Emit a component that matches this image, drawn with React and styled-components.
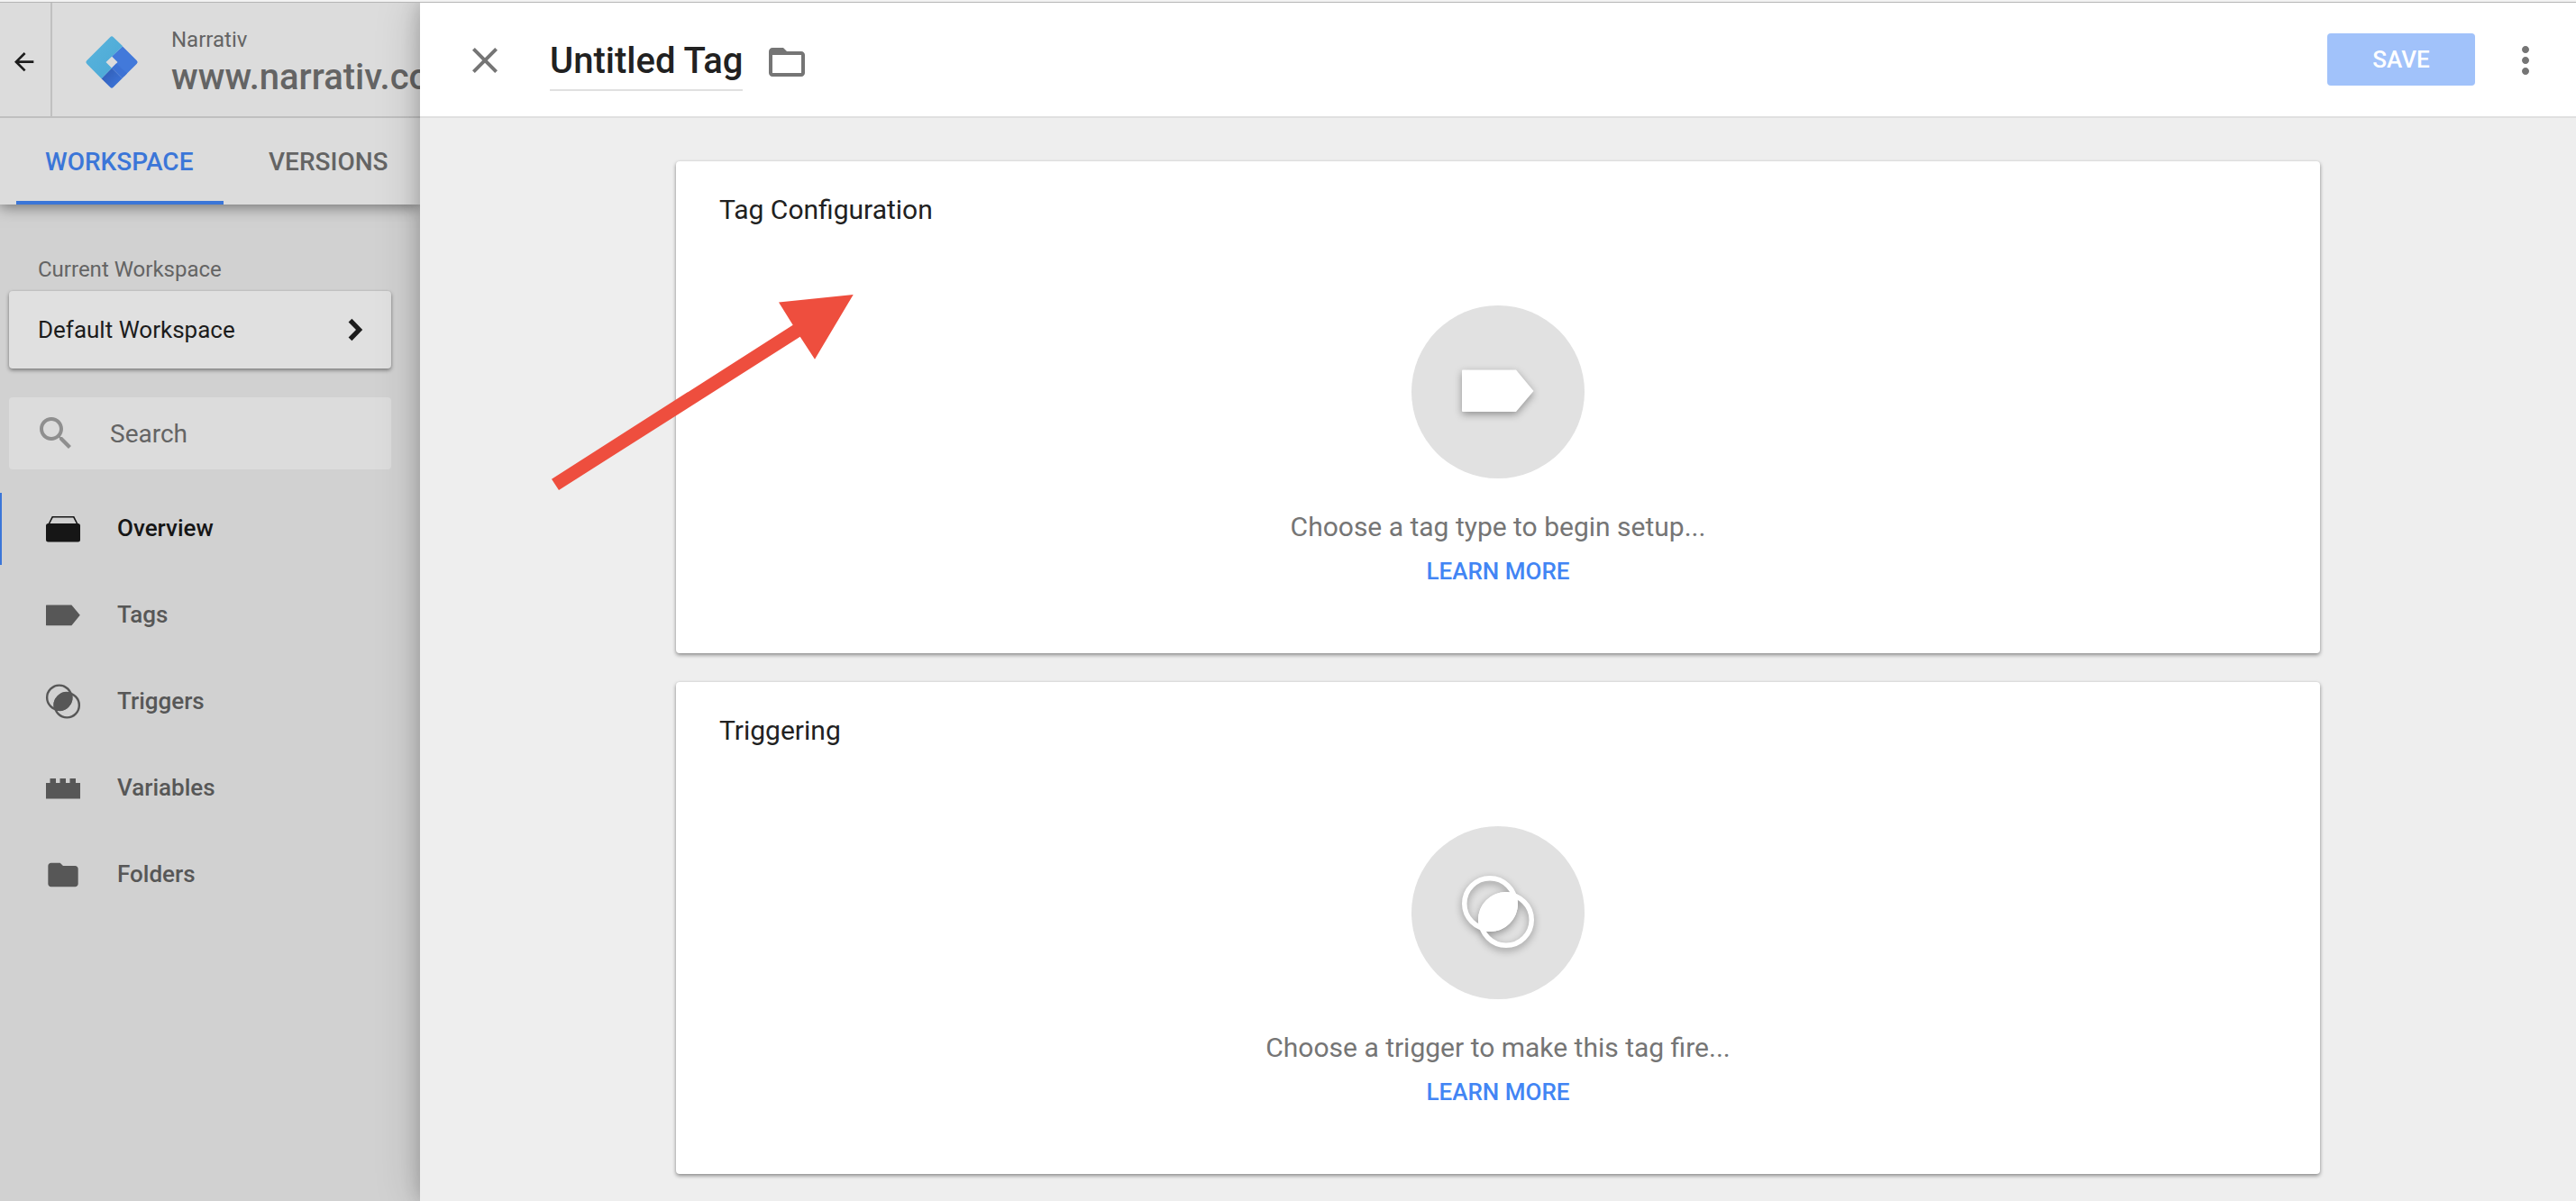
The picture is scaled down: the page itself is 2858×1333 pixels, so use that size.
import React, { useState } from 'react';
import styled, { createGlobalStyle, css } from 'styled-components';

const color = {
  blue: '#4285f4',
  dimBlue: '#3b76d8',
  ink: '#212121',
  dimInk: '#1c1c1c',
  gray: '#757575',
  dimGray: '#646464',
  line: '#e0e0e0',
  dimLine: '#c0c0c0',
};

const raised = '0 2px 4px rgba(0, 0, 0, 0.42), 0 0 2px rgba(0, 0, 0, 0.08)';

const GlobalStyle = createGlobalStyle`
  *, *::before, *::after { box-sizing: border-box; }
  body {
    margin: 0;
    font-family: Roboto, "Liberation Sans", sans-serif;
    color: ${color.ink};
    background: #eeeeee;
  }
  button, input { font-family: inherit; margin: 0; }
`;

const Page = styled.div`
  display: flex;
  flex-direction: column;
  min-height: 100vh;
`;

const WindowEdge = styled.div`
  height: 3px;
  background: #f3f3f3;
  border-bottom: 1px solid #b5b5b5;
`;

const Columns = styled.div`
  display: flex;
  flex: 1;
`;

/* ---------- sidebar ---------- */

const Sidebar = styled.aside`
  flex: 0 0 466px;
  min-width: 0;
  overflow: hidden;
  display: flex;
  flex-direction: column;
  background: #d1d1d1;
`;

const SidebarTop = styled.div`
  background: #dcdcdc;
  box-shadow: 0 2px 16px rgba(0, 0, 0, 0.5);
`;

const AccountBar = styled.header`
  display: flex;
  align-items: center;
  height: 128px;
  border-bottom: 2px solid ${color.dimLine};
`;

const IconButton = styled.button`
  display: flex;
  align-items: center;
  justify-content: center;
  padding: 0;
  border: 0;
  background: none;
  color: ${color.gray};
  cursor: pointer;
`;

const BackButton = styled(IconButton)`
  align-self: stretch;
  flex: 0 0 58px;
  border-right: 2px solid ${color.dimLine};
  color: ${color.dimInk};
`;

const Brand = styled.div`
  display: flex;
  align-items: center;
  gap: 34px;
  padding: 4px 0 0 34px;
  white-space: nowrap;
  color: ${color.dimGray};
`;

const AccountName = styled.div`
  font-size: 24px;
  line-height: 36px;
`;

const ContainerName = styled.div`
  font-size: 40px;
  font-weight: 500;
  line-height: 48px;
`;

const Tabs = styled.div`
  display: flex;
  gap: 18px;
  height: 96px;
  padding-left: 18px;
`;

const Tab = styled.button`
  min-width: 230px;
  padding: 0 32px;
  border: 0;
  border-top: 4px solid transparent;
  border-bottom: 4px solid ${(p) => (p.$active ? color.dimBlue : 'transparent')};
  background: none;
  font-size: 28px;
  font-weight: 500;
  text-align: left;
  color: ${(p) => (p.$active ? color.dimBlue : color.dimGray)};
  cursor: pointer;
`;

const SidebarBody = styled.div`
  display: flex;
  flex-direction: column;
  padding: 56px 32px 32px 10px;
`;

const WorkspaceLabel = styled.div`
  padding-left: 32px;
  margin-bottom: 8px;
  font-size: 24px;
  line-height: 32px;
  color: ${color.dimGray};
`;

const WorkspaceButton = styled.button`
  display: flex;
  align-items: center;
  justify-content: space-between;
  height: 86px;
  padding: 0 16px 0 32px;
  border: 0;
  border-radius: 4px;
  background: #e0e0e0;
  box-shadow: ${raised};
  font-size: 26px;
  color: ${color.dimInk};
  cursor: pointer;
`;

const SearchBox = styled.label`
  display: flex;
  align-items: center;
  gap: 36px;
  height: 80px;
  margin-top: 32px;
  padding: 0 28px;
  border-radius: 4px;
  background: #dcdcdc;
  color: #8f8f8f;
`;

const SearchInput = styled.input`
  flex: 1;
  min-width: 0;
  padding: 0;
  border: 0;
  outline: 0;
  background: none;
  font-size: 28px;
  color: ${color.dimInk};
  &::placeholder {
    color: ${color.dimGray};
    opacity: 1;
  }
`;

const NavList = styled.nav`
  display: flex;
  flex-direction: column;
  gap: 16px;
  margin: 26px 0 0 -10px;
`;

const NavItem = styled.a`
  display: flex;
  align-items: center;
  gap: 40px;
  height: 80px;
  padding-left: 48px;
  border-left: 2px solid transparent;
  font-size: 26px;
  font-weight: 500;
  color: #575757;
  text-decoration: none;
  ${(p) =>
    p.$active &&
    css`
      border-left-color: ${color.dimBlue};
      color: #161616;
    `}
`;

const NavText = styled.span`
  padding-bottom: 2px;
`;

/* ---------- drawer ---------- */

const Drawer = styled.main`
  position: relative;
  z-index: 1;
  flex: 1;
  min-width: 0;
  background: #eeeeee;
  box-shadow: 0 0 20px rgba(0, 0, 0, 0.2), 0 0 48px rgba(0, 0, 0, 0.18);
  clip-path: inset(0 0 0 -80px);
`;

const DrawerHeader = styled.header`
  display: flex;
  align-items: center;
  height: 128px;
  padding: 0 32px 0 48px;
  background: #ffffff;
  box-shadow: inset 0 -2px ${color.line};
`;

const TitleInput = styled.input`
  field-sizing: content;
  min-width: 96px;
  height: 68px;
  margin: 0 25px 0 48px;
  padding: 0;
  border: 0;
  border-top: 2px solid transparent;
  border-bottom: 2px solid ${color.line};
  outline: 0;
  background: none;
  font-size: 40px;
  font-weight: 500;
  color: ${color.ink};
`;

const SaveButton = styled.button`
  width: 164px;
  height: 58px;
  margin: 0 32px 2px auto;
  padding: 0;
  border: 0;
  border-radius: 4px;
  background: #a1c2fa;
  font-size: 26px;
  font-weight: 500;
  color: #ffffff;
`;

const CardStack = styled.div`
  display: flex;
  flex-direction: column;
  gap: 32px;
  max-width: 1888px;
  margin: 0 auto;
  padding: 48px 32px 30px;
`;

const Card = styled.section`
  display: flex;
  flex-direction: column;
  align-items: center;
  padding: 36px 48px 76px;
  border-radius: 4px;
  background: #ffffff;
  box-shadow: ${raised};
`;

const CardTitle = styled.h2`
  align-self: flex-start;
  margin: 0;
  font-size: 30px;
  font-weight: 400;
  line-height: 36px;
`;

const PickButton = styled.button`
  display: flex;
  align-items: center;
  justify-content: center;
  width: 192px;
  height: 192px;
  margin: 88px 0 36px;
  padding: 0;
  border: 0;
  border-radius: 50%;
  background: #e1e1e1;
  color: #ffffff;
  cursor: pointer;
  svg {
    overflow: visible;
    filter: drop-shadow(0 3px 4px rgba(0, 0, 0, 0.35));
  }
`;

const Prompt = styled.p`
  margin: 0 0 16px;
  font-size: 30px;
  line-height: 36px;
  color: ${color.gray};
`;

const LearnMore = styled.a`
  font-size: 26px;
  font-weight: 500;
  line-height: 30px;
  color: ${color.blue};
  text-decoration: none;
`;

const Pointer = styled.svg`
  position: absolute;
  left: 146px;
  top: 324px;
  pointer-events: none;
`;

/* ---------- drawings ---------- */

const Glyph = ({ size = 48, d, box = '0 0 24 24' }) => (
  <svg width={size} height={size} viewBox={box} fill="currentColor" aria-hidden="true">
    <path d={d} />
  </svg>
);

const paths = {
  back: 'M20 11H7.83l5.59-5.59L12 4l-8 8 8 8 1.41-1.41L7.83 13H20v-2z',
  close: 'M19 6.41L17.59 5 12 10.59 6.41 5 5 6.41 10.59 12 5 17.59 6.41 19 12 13.41 17.59 19 19 17.59 13.41 12z',
  chevron: 'M10.2 5.9L8.3 7.8 12.5 12l-4.2 4.2 1.9 1.9L16.1 12z',
  search:
    'M15.5 14h-.79l-.28-.27C15.41 12.59 16 11.11 16 9.5 16 5.91 13.09 3 9.5 3S3 5.91 3 9.5 5.91 16 9.5 16c1.61 0 3.09-.59 4.23-1.57l.27.28v.79l5 4.99L20.49 19l-4.99-5zm-6 0C7.01 14 5 11.99 5 9.5S7.01 5 9.5 5 14 7.01 14 9.5 11.99 14 9.5 14z',
  folder: 'M10 4H4c-1.1 0-1.99.9-1.99 2L2 18c0 1.1.9 2 2 2h16c1.1 0 2-.9 2-2V8c0-1.1-.9-2-2-2h-8l-2-2z',
  folderOpen:
    'M20 6h-8l-2-2H4c-1.1 0-1.99.9-1.99 2L2 18c0 1.1.9 2 2 2h16c1.1 0 2-.9 2-2V8c0-1.1-.9-2-2-2zm0 12H4V8h16v10z',
  more: 'M12 8c1.1 0 2-.9 2-2s-.9-2-2-2-2 .9-2 2 .9 2 2 2zm0 2c-1.1 0-2 .9-2 2s.9 2 2 2 2-.9 2-2-.9-2-2-2zm0 6c-1.1 0-2 .9-2 2s.9 2 2 2 2-.9 2-2-.9-2-2-2z',
};

const Logo = () => (
  <svg width="64" height="64" viewBox="-3 -4 64 64" aria-hidden="true">
    <defs>
      <linearGradient id="logoLight" x1="0" y1="0" x2="1" y2="1">
        <stop offset="0" stopColor="#5ab4dc" />
        <stop offset="1" stopColor="#4aa8d6" />
      </linearGradient>
      <linearGradient id="logoDark" gradientUnits="userSpaceOnUse" x1="27" y1="33" x2="40" y2="46">
        <stop offset="0" stopColor="#325fb8" />
        <stop offset="1" stopColor="#3a70d2" />
      </linearGradient>
    </defs>
    <path d="M41 11.5L56.8 27.2Q58.6 29 56.8 30.8L43 44.6 29 35.5 35.5 29 29 22.5z" fill="#4279da" />
    <path d="M29 35.5L40.6 47 30.8 56.8Q29 58.6 27.2 56.8L17.5 47.2z" fill="url(#logoDark)" />
    <path d="M29 35.5L40.6 47 46 41.6 34 30.5z" fill="#3d72d4" />
    <path
      d="M41.2 11.2L30.8 1.2Q29 -.6 27.2 1.2L1.2 27.2Q-.6 29 1.2 30.8L17.5 47.2 29 35.5 22.5 29z"
      fill="url(#logoLight)"
    />
  </svg>
);

const OverviewIcon = () => (
  <svg width="40" height="40" viewBox="0 0 40 40" aria-hidden="true">
    <path d="M4 15L8.2 6.8H31.8L36 15" fill="none" stroke="currentColor" strokeWidth="1.6" />
    <rect x="1" y="14" width="38" height="20.5" rx="2.5" fill="currentColor" />
  </svg>
);

const TagIcon = ({ size = 40 }) => (
  <svg width={size} height={size} viewBox="0 0 40 40" fill="currentColor" aria-hidden="true">
    <path d="M1.6 8.4H29.4L38.8 19.8 29.4 31.2H1.6Q1 31.2 1 30.6V9Q1 8.4 1.6 8.4z" />
  </svg>
);

const LargeTagIcon = () => (
  <svg width="80" height="80" viewBox="0 0 80 80" fill="currentColor" aria-hidden="true">
    <path d="M1 15.5H60L79.5 39 60 62H1Q0 62 0 61V16.5Q0 15.5 1 15.5z" />
  </svg>
);

/* Two overlapping rings with their shared part filled in. */
const TriggerIcon = ({ size = 40, box = '-2 -1 84 84', stroke = 5 }) => (
  <svg width={size} height={size} viewBox={box} aria-hidden="true">
    <g fill="none" stroke="currentColor" strokeWidth={stroke}>
      <circle cx="31" cy="31" r={31 - stroke / 2} />
      <circle cx="49" cy="49" r={31 - stroke / 2} />
    </g>
    <path d="M60 20A31 31 0 0 1 20 60A31 31 0 0 1 60 20z" fill="currentColor" />
  </svg>
);

const VariablesIcon = () => (
  <svg width="40" height="40" viewBox="0 0 40 40" fill="currentColor" aria-hidden="true">
    <path d="M1 14H5.5V9H12V14H16.5V9H23V14H27.5V9H34V14H39V31.5H1z" />
  </svg>
);

const FolderIcon = () => <Glyph size={40} d={paths.folder} />;

const navItems = [
  { label: 'Overview', Icon: OverviewIcon },
  { label: 'Tags', Icon: TagIcon },
  { label: 'Triggers', Icon: TriggerIcon },
  { label: 'Variables', Icon: VariablesIcon },
  { label: 'Folders', Icon: FolderIcon },
];

const SetupCard = ({ title, prompt, children }) => (
  <Card>
    <CardTitle>{title}</CardTitle>
    <PickButton aria-label={prompt}>{children}</PickButton>
    <Prompt>{prompt}</Prompt>
    <LearnMore href="#learn">LEARN MORE</LearnMore>
  </Card>
);

export default function App() {
  const [title, setTitle] = useState('Untitled Tag');
  const [query, setQuery] = useState('');

  return (
    <Page>
      <GlobalStyle />
      <WindowEdge />
      <Columns>
        <Sidebar>
          <SidebarTop>
            <AccountBar>
              <BackButton aria-label="Back">
                <Glyph size={32} d={paths.back} box="1 -2 24 24" />
              </BackButton>
              <Brand>
                <Logo />
                <div>
                  <AccountName>Narrativ</AccountName>
                  <ContainerName>www.narrativ.com</ContainerName>
                </div>
              </Brand>
            </AccountBar>
            <Tabs role="tablist">
              <Tab role="tab" aria-selected="true" $active>WORKSPACE</Tab>
              <Tab role="tab" aria-selected="false">VERSIONS</Tab>
            </Tabs>
          </SidebarTop>
          <SidebarBody>
            <WorkspaceLabel id="workspace-label">Current Workspace</WorkspaceLabel>
            <WorkspaceButton aria-describedby="workspace-label">
              Default Workspace
              <Glyph d={paths.chevron} />
            </WorkspaceButton>
            <SearchBox>
              <Glyph d={paths.search} />
              <SearchInput
                aria-label="Search"
                placeholder="Search"
                value={query}
                onChange={(e) => setQuery(e.target.value)}
              />
            </SearchBox>
            <NavList>
              {navItems.map(({ label, Icon }, i) => (
                <NavItem key={label} href={`#${label.toLowerCase()}`} $active={i === 0}>
                  <Icon />
                  <NavText>{label}</NavText>
                </NavItem>
              ))}
            </NavList>
          </SidebarBody>
        </Sidebar>

        <Drawer>
          <DrawerHeader>
            <IconButton aria-label="Close">
              <Glyph d={paths.close} />
            </IconButton>
            <TitleInput aria-label="Tag name" value={title} onChange={(e) => setTitle(e.target.value)} />
            <IconButton aria-label="Move to folder">
              <Glyph d={paths.folderOpen} box="0 -1 24 24" />
            </IconButton>
            <SaveButton disabled>SAVE</SaveButton>
            <IconButton aria-label="More actions">
              <Glyph d={paths.more} />
            </IconButton>
          </DrawerHeader>
          <CardStack>
            <SetupCard title="Tag Configuration" prompt="Choose a tag type to begin setup...">
              <LargeTagIcon />
            </SetupCard>
            <SetupCard title="Triggering" prompt="Choose a trigger to make this tag fire...">
              <TriggerIcon size={80} box="0 1 80 80" stroke={5.5} />
            </SetupCard>
          </CardStack>
          <Pointer width="335" height="217" viewBox="0 0 335 217" aria-hidden="true">
            <path d="M0 204.7L267.7 33.7 252 8.5 334.7 0 292 71.7 275.7 46.7 8 217z" fill="#ee4e3e" />
          </Pointer>
        </Drawer>
      </Columns>
    </Page>
  );
}
